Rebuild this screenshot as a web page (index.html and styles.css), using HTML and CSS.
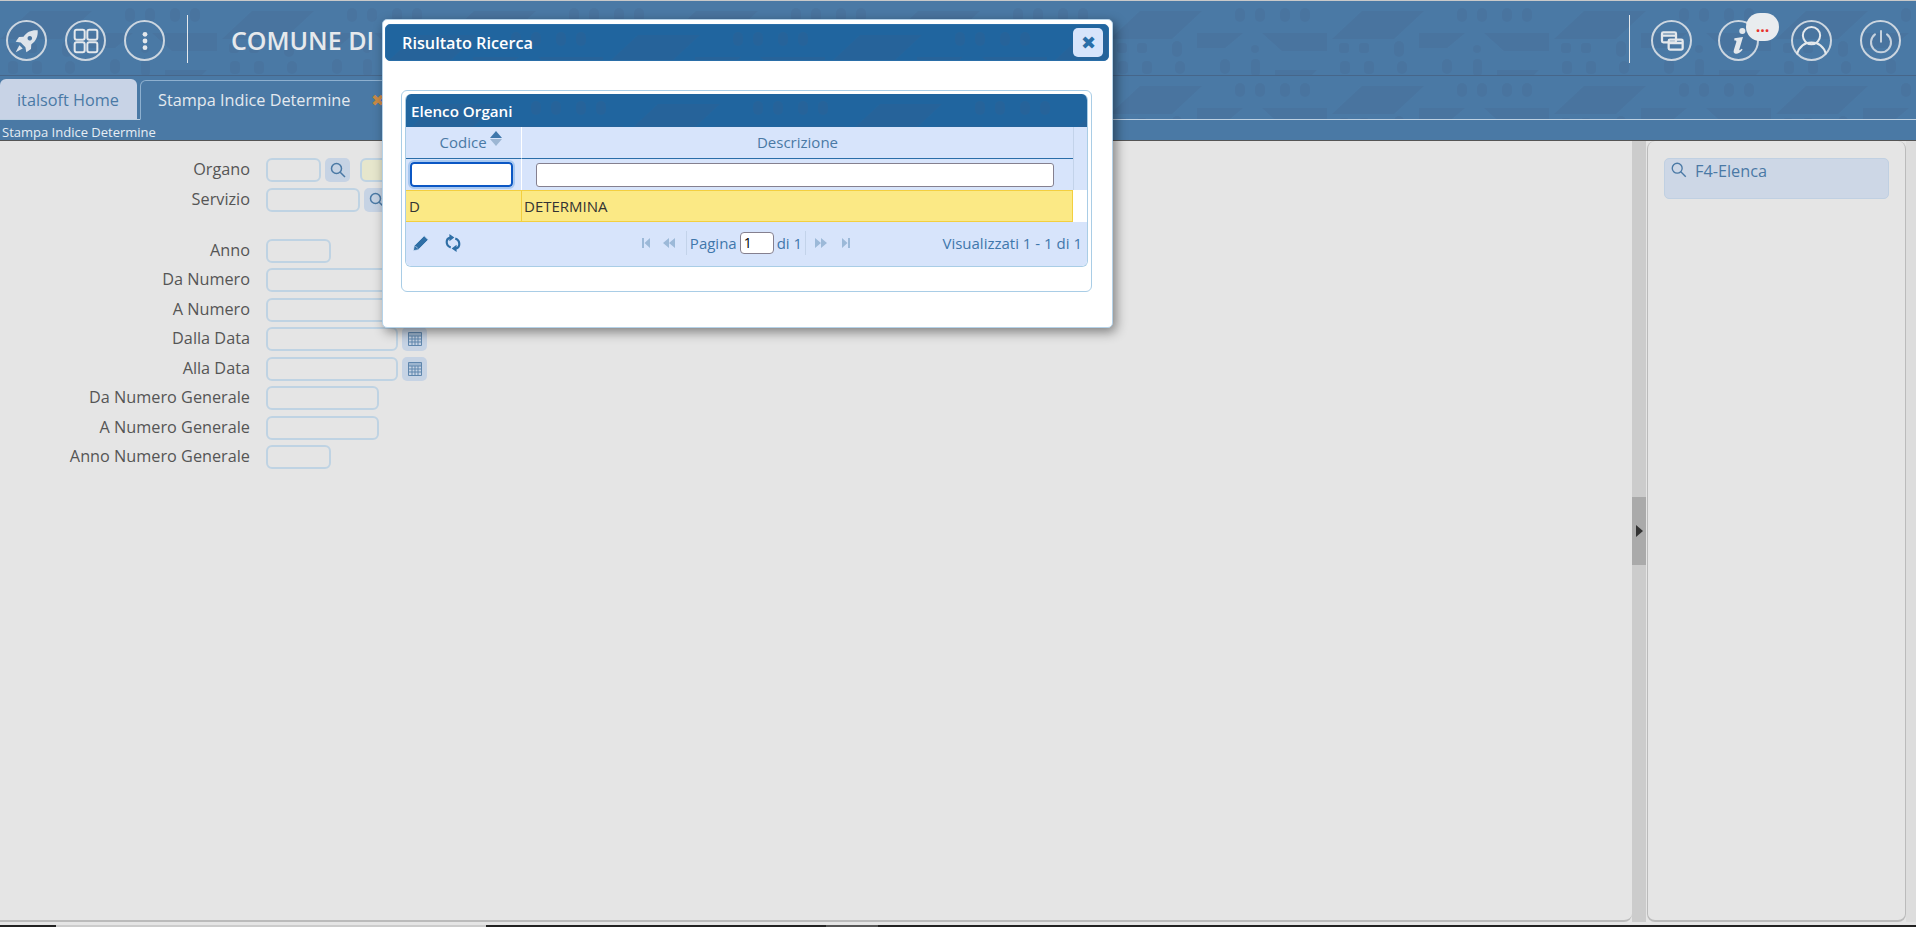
FILE: index.html
```html
<!DOCTYPE html>
<html lang="it">
<head>
  <meta charset="UTF-8">
  <title>Stampa Indice Determine</title>
  <link rel="stylesheet" href="styles.css">
</head>
<body>
  <svg class="defs" width="0" height="0">
    <defs>
      <pattern id="circuit" width="222" height="76" patternUnits="userSpaceOnUse">
        <g fill="#3f5a80" fill-opacity="0.17">
          <path d="M0 38 30 10h62L62 38z"/>
          <path d="M152 32h65v18h-45z"/>
          <path d="M87 32h46l-18 15H87z"/>
          <rect x="125" y="7" width="10" height="14" rx="5"/>
          <rect x="145" y="7" width="10" height="14" rx="5"/>
          <rect x="170" y="7" width="10" height="14" rx="5"/>
          <rect x="190" y="7" width="10" height="14" rx="5"/>
          <rect x="7" y="42" width="10" height="10" rx="3"/>
          <rect x="27" y="42" width="10" height="10" rx="3"/>
          <rect x="62" y="40" width="10" height="16" rx="5"/>
          <circle cx="145" cy="48" r="4"/>
          <rect x="8" y="60" width="10" height="13" rx="4"/>
          <rect x="32" y="60" width="10" height="13" rx="4"/>
          <rect x="65" y="60" width="10" height="13" rx="5"/>
          <rect x="110" y="58" width="10" height="15" rx="5"/>
          <rect x="141" y="58" width="9" height="17" rx="4"/>
          <path d="M165 69h42l-6 6h-36z"/>
        </g>
      </pattern>
    </defs>
  </svg>

  <header class="topbar">
    <svg class="deco"><rect width="100%" height="100%" fill="url(#circuit)"/></svg>
    <div class="topbar-left">
      <button class="round-btn">
        <svg viewBox="0 0 24 24"><path d="M20 4c-4.500-.4-8.200 1.200-10.600 4.800L6 9 3.500 12.500l3.800.7 3.500 3.500.7 3.800 3.500-2.500.2-3.400c3.600-2.400 5.200-6.100 4.800-10.600zM15.800 10a1.700 1.700 0 1 1 0-.01zM6.300 15.200 3.500 20.500l5.300-2.800z" fill="#dde3ea"/></svg>
      </button>
      <button class="round-btn">
        <svg viewBox="0 0 24 24" fill="none" stroke="#e4e8ec" stroke-width="1.500"><rect x="3.500" y="3.500" width="7.500" height="7.500" rx="1.500"/><rect x="13" y="3.500" width="7.500" height="7.500" rx="1.500"/><rect x="3.500" y="13" width="7.500" height="7.500" rx="1.500"/><rect x="13" y="13" width="7.500" height="7.500" rx="1.500"/></svg>
      </button>
      <button class="round-btn">
        <svg viewBox="0 0 24 24" fill="#e4e8ec"><circle cx="12" cy="7" r="1.800"/><circle cx="12" cy="12" r="1.800"/><circle cx="12" cy="17" r="1.800"/></svg>
      </button>
      <span class="vsep"></span>
      <h1 class="ente">COMUNE DI</h1>
    </div>
    <div class="topbar-right">
      <span class="vsep"></span>
      <button class="round-btn btn-windows">
        <svg viewBox="0 0 24 24" fill="none" stroke="#e4e8ec" stroke-width="1.700"><rect x="4.500" y="5.500" width="10.500" height="7.500" rx="1"/><rect x="9.500" y="11" width="10.500" height="7.500" rx="1"/><path d="M4.500 8h10.500M9.500 13.500H20"/></svg>
      </button>
      <button class="round-btn btn-info">
        <svg viewBox="0 0 24 24" fill="#e4e8ec"><circle cx="14.500" cy="4.500" r="2.300"/><path d="M8.500 10l6.500-1-2.800 9.300c-.2.700.4.900 1.900-.4l.6.600c-1.700 2-3.500 3.200-5.200 3-1.500-.2-1.800-1.300-1.300-2.900l1.800-5.800c.2-.9-.3-1.200-1.500-1.100z"/></svg>
        <span class="badge">...</span>
      </button>
      <button class="round-btn btn-user">
        <svg viewBox="0 0 24 24" fill="none" stroke="#e4e8ec" stroke-width="1.300"><circle cx="12" cy="8.800" r="5.600"/><path d="M2.500 21c1.500-5 5-7.700 9.500-7.700s8 2.700 9.500 7.700"/></svg>
      </button>
      <button class="round-btn btn-power">
        <svg viewBox="0 0 24 24" fill="none" stroke="#c6d2de" stroke-width="1.500" stroke-linecap="round"><path d="M12 4.500v8M7.500 7a7.500 7.500 0 1 0 9 0"/></svg>
      </button>
    </div>
  </header>

  <nav class="tabbar">
    <svg class="deco"><rect width="100%" height="100%" fill="url(#circuit)"/></svg>
    <a class="tab tab-home">italsoft Home</a>
    <a class="tab tab-active">Stampa Indice Determine <span class="tab-close">&#10006;</span></a>
  </nav>
  <div class="subtitle">Stampa Indice Determine</div>

  <main class="workarea">
    <section class="panel-main">
      <form class="form-grid">
        <label>Organo</label>
        <div class="field"><input class="w-55"><button type="button" class="icon-btn"><svg viewBox="0 0 20 20" class="ico-search"><circle cx="8.500" cy="8.500" r="5"/><path d="M12.200 12.200l4.800 4.800"/></svg></button><input class="w-55 yellowish"></div>
        <label>Servizio</label>
        <div class="field"><input class="w-94"><button type="button" class="icon-btn"><svg viewBox="0 0 20 20" class="ico-search"><circle cx="8.500" cy="8.500" r="5"/><path d="M12.200 12.200l4.800 4.800"/></svg></button></div>
        <div class="form-gap"></div>
        <label>Anno</label>
        <div class="field"><input class="w-65"></div>
        <label>Da Numero</label>
        <div class="field"><input class="w-132"></div>
        <label>A Numero</label>
        <div class="field"><input class="w-132"></div>
        <label>Dalla Data</label>
        <div class="field"><input class="w-132"><button type="button" class="icon-btn"><svg viewBox="0 0 20 20" class="ico-cal"><path class="cal-top" d="M3.500 3.500h13V7h-13z"/><path d="M3.500 3.500h13v13h-13zM3.500 7h13M3.500 10h13M3.500 13h13M7 7v9.500M10 7v9.500M13 7v9.500"/></svg></button></div>
        <label>Alla Data</label>
        <div class="field"><input class="w-132"><button type="button" class="icon-btn"><svg viewBox="0 0 20 20" class="ico-cal"><path class="cal-top" d="M3.500 3.500h13V7h-13z"/><path d="M3.500 3.500h13v13h-13zM3.500 7h13M3.500 10h13M3.500 13h13M7 7v9.500M10 7v9.500M13 7v9.500"/></svg></button></div>
        <label>Da Numero Generale</label>
        <div class="field"><input class="w-113"></div>
        <label>A Numero Generale</label>
        <div class="field"><input class="w-113"></div>
        <label>Anno Numero Generale</label>
        <div class="field"><input class="w-65"></div>
      </form>
    </section>
    <div class="splitter"><span class="splitter-handle"><i></i></span></div>
    <aside class="panel-side">
      <button class="f4-btn"><svg viewBox="0 0 20 20" class="ico-search"><circle cx="8" cy="8" r="5.500"/><path d="M12 12l5.500 5.500"/></svg>F4-Elenca</button>
    </aside>
    <div class="side-strip"></div>
  </main>

  <div class="bottom-strip">
    <span class="bs-dark b1"></span><span class="bs-light"></span><span class="bs-dark b2"></span><span class="bs-grey"></span><span class="bs-dark b3"></span>
  </div>

  <div class="dialog">
    <div class="dialog-title">
      <svg class="deco"><rect width="100%" height="100%" fill="url(#circuit)"/></svg>
      <span>Risultato Ricerca</span>
      <button class="dialog-close">&#10006;</button>
    </div>
    <div class="dialog-body">
      <div class="grid-wrap">
        <div class="grid">
          <div class="grid-caption">
            <svg class="deco"><rect width="100%" height="100%" fill="url(#circuit)"/></svg>
            <span>Elenco Organi</span>
          </div>
          <div class="grid-row grid-head">
            <div class="col-a">Codice <span class="sort"><i class="up"></i><i class="down"></i></span></div>
            <div class="col-b">Descrizione</div>
            <div class="col-s"></div>
          </div>
          <div class="grid-row grid-filter">
            <div class="col-a"><input class="filter-focus"></div>
            <div class="col-b"><input class="filter-input"></div>
            <div class="col-s"></div>
          </div>
          <div class="grid-row grid-data">
            <div class="col-a">D</div>
            <div class="col-b">DETERMINA</div>
            <div class="col-s"></div>
          </div>
          <div class="pager">
            <div class="pager-left">
              <svg viewBox="0 0 20 20" class="pg-tool"><path d="M13.500 2l4.500 4.500L7 17.500 1.500 18.500l1-5.500zM3.800 13.400l2.800 2.800" fill="#2f6fa6" stroke="#d7e4fb" stroke-width="0.800"/></svg>
              <svg viewBox="0 0 20 20" class="pg-tool"><path d="M7 4C4.500 4.500 3 6.500 3 9c0 2.800 1.800 5 4.500 6M13 16c2.500-.5 4-2.500 4-5 0-2.800-1.800-5-4.500-6" fill="none" stroke="#2f6fa6" stroke-width="2.400"/><path d="M6 0v8l5.500-4zM14 20v-8l-5.500 4z" fill="#2f6fa6"/></svg>
            </div>
            <div class="pager-mid">
              <svg viewBox="0 0 12 12" class="pg-nav nav-first"><path d="M2 1h2v10H2zM10 1v10L4.500 6z"/></svg>
              <svg viewBox="0 0 14 12" class="pg-nav nav-prev"><path d="M7 1v10L1 6zM13 1v10L7 6z"/></svg>
              <span class="pg-sep sep-a"></span>
              <span class="pg-label">Pagina</span><input class="pg-input" value="1"><span class="pg-label pg-of">di 1</span>
              <span class="pg-sep sep-b"></span>
              <svg viewBox="0 0 14 12" class="pg-nav nav-next"><path d="M1 1v10l6-5zM7 1v10l6-5z"/></svg>
              <svg viewBox="0 0 12 12" class="pg-nav nav-last"><path d="M2 1v10l5.500-5zM8 1h2v10H8z"/></svg>
            </div>
            <div class="pager-right">Visualizzati 1 - 1 di 1</div>
          </div>
        </div>
      </div>
    </div>
  </div>
</body>
</html>
```

FILE: styles.css
```css
* {
  box-sizing: border-box;
}
html, body {
  height: 100%;
}
body {
  margin: 0;
  height: 927px;
  overflow: hidden;
  display: flex;
  flex-direction: column;
  background-color: #e5e5e5;
  font-family: 'Open Sans', sans-serif;
  color: #555;
  border-top: 1px solid #c9c9c9;
}
button {
  font-family: inherit;
}
.defs {
  position: absolute;
}
.deco {
  position: absolute;
  left: 0;
  top: 0;
  width: 100%;
  height: 100%;
  pointer-events: none;
}

/* barra in alto */
.topbar {
  position: relative;
  height: 75px;
  flex: none;
  display: flex;
  justify-content: space-between;
  background-color: #4a79a5;
  border-bottom: 1px solid #46668a;
}
.topbar-left, .topbar-right {
  position: relative;
  display: flex;
  align-items: center;
}
.topbar-left {
  padding-left: 6px;
}
.topbar-left .round-btn {
  margin-right: 18px;
}
.topbar-left .vsep {
  margin: 2px 43px 0 4px;
}
.topbar-right {
  padding-right: 15px;
}
.topbar-right .vsep {
  margin-top: 2px;
}
.round-btn {
  position: relative;
  width: 41px;
  height: 41px;
  margin-top: 5px;
  padding: 0;
  border: 2px solid #ccd6e0;
  border-radius: 50%;
  background: transparent;
  display: flex;
  align-items: center;
  justify-content: center;
}
.round-btn svg {
  width: 32px;
  height: 32px;
}
.vsep {
  width: 1px;
  height: 48px;
  background-color: #e4e8ec;
}
.ente {
  margin: 3px 0 0;
  font-size: 25px;
  font-weight: 600;
  color: #e6e9ec;
}
.btn-windows {
  margin-left: 21px;
}
.btn-info {
  margin-left: 26px;
}
.btn-user {
  margin-left: 32px;
}
.btn-user svg {
  width: 37px;
  height: 37px;
}
.btn-power {
  margin-left: 28px;
}
.badge {
  position: absolute;
  left: 26px;
  top: -9px;
  width: 33px;
  height: 28px;
  border-radius: 14px;
  background-color: #e9ecef;
  color: #e8322c;
  font-size: 16px;
  font-weight: 700;
  line-height: 26px;
  text-align: center;
}

/* schede */
.tabbar {
  position: relative;
  height: 44px;
  flex: none;
  display: flex;
  align-items: flex-end;
  gap: 3px;
  background-color: #4a79a5;
  border-bottom: 1px solid #bcd0e2;
}
.tab {
  position: relative;
  height: 40px;
  padding-top: 8px;
  font-size: 16.250px;
  border-radius: 6px 6px 0 0;
}
.tab-home {
  width: 137px;
  padding-top: 10px;
  padding-left: 17px;
  background-color: #c8d3e6;
  color: #4a79a5;
}
.tab-active {
  width: 300px;
  margin-bottom: -1px;
  padding-left: 17px;
  background-color: #4a79a5;
  color: #e4e9ef;
  border: 1px solid #8eb0cf;
  border-bottom: 1px solid #4a79a5;
}
.tab-close {
  margin-left: 16px;
  color: #c98a45;
  font-size: 16px;
}
.subtitle {
  height: 21px;
  flex: none;
  padding: 4px 0 0 2px;
  background-color: #4a79a5;
  border-bottom: 1px solid #555;
  color: #e6edf4;
  font-size: 13px;
  line-height: 16px;
}

/* area di lavoro */
.workarea {
  flex: 1;
  min-height: 0;
  display: flex;
  padding-bottom: 5px;
}
.panel-main {
  width: 1632px;
  flex: none;
  border-bottom: 2px solid #bbb;
  border-radius: 0 0 8px 0;
  padding-top: 17px;
}
.splitter {
  width: 14px;
  flex: none;
  display: flex;
  align-items: center;
  background-color: #ccc;
}
.splitter-handle {
  width: 14px;
  height: 68px;
  margin-top: -2px;
  display: flex;
  align-items: center;
  justify-content: center;
  background-color: #aaa;
}
.splitter-handle i {
  border-left: 7px solid #333;
  border-top: 6px solid transparent;
  border-bottom: 6px solid transparent;
}
.panel-side {
  width: 259px;
  flex: none;
  margin-left: 1px;
  padding: 17px 16px 0 16px;
  border: 1px solid #bbb;
  border-width: 0 1px 2px 1px;
  border-radius: 8px;
}
.side-strip {
  flex: 1;
  background-color: #ddd;
}
.f4-btn {
  width: 225px;
  height: 41px;
  display: flex;
  align-items: flex-start;
  padding: 1px 5px;
  gap: 7px;
  border: 1px solid #c0d0e2;
  border-radius: 5px;
  background-color: #cdd7e6;
  color: #4a79a5;
  font-size: 16.250px;
}
.f4-btn .ico-search {
  width: 18px;
  height: 18px;
  margin-top: 1px;
}
.ico-search {
  fill: none;
  stroke: #4a79a5;
  stroke-width: 1.500;
}
.ico-cal {
  fill: none;
  stroke: #5f86ad;
  stroke-width: 1;
}
.ico-cal .cal-top {
  fill: #9db5cf;
  stroke: none;
}

/* modulo */
.form-grid {
  display: grid;
  grid-template-columns: 250px 1fr;
  column-gap: 16px;
  row-gap: 5.500px;
  align-items: center;
}
.form-grid label {
  height: 24px;
  text-align: right;
  font-size: 16.250px;
  line-height: 22px;
  color: #555;
}
.form-gap {
  grid-column: 1 / 3;
  height: 16px;
}
.field {
  display: flex;
  align-items: center;
  gap: 4px;
  height: 24px;
}
.field input {
  height: 24px;
  padding: 0 4px;
  border: 2px solid #bfd3e3;
  border-radius: 6px;
  background-color: #e5e5e5;
}
.w-55 { width: 55px; }
.w-65 { width: 65px; }
.w-94 { width: 94px; }
.w-113 { width: 113px; }
.w-132 { width: 132px; }
.field input.yellowish {
  margin-left: 6px;
  background-color: #e6e6cc;
}
.icon-btn {
  width: 25px;
  height: 24px;
  padding: 2px;
  border: none;
  border-radius: 5px;
  background-color: #c6d3e4;
  display: flex;
  align-items: center;
  justify-content: center;
}
.icon-btn svg {
  width: 20px;
  height: 20px;
}

/* finestra di dialogo */
.dialog {
  position: absolute;
  left: 382px;
  top: 19px;
  width: 731px;
  height: 309px;
  padding: 4px;
  background-color: #fff;
  border-radius: 5px;
  border: 1px solid #b5d2e8;
  box-shadow: 3px 4px 12px rgba(0,0,0,0.45);
}
.dialog-title {
  position: relative;
  height: 37px;
  margin: 0 -1px 0 -2px;
  border-radius: 5px;
  background-color: #20659f;
  border: 1px solid #2a6ea8;
  color: #fff;
  font-size: 16.250px;
  font-weight: 600;
  line-height: 36px;
  padding-left: 16px;
}
.dialog-title span {
  position: relative;
}
.dialog-close {
  position: absolute;
  right: 5px;
  top: 3px;
  width: 30px;
  height: 29px;
  padding: 0;
  border: none;
  border-radius: 5px;
  background-color: #d7e4fb;
  color: #2a6ea8;
  font-size: 18px;
  line-height: 29px;
}
.dialog-body {
  padding: 29px 16px 0 14px;
}
.grid-wrap {
  height: 202px;
  padding: 3px;
  border: 1px solid #a9cde6;
  border-radius: 6px;
}
.grid {
  height: 173px;
  display: flex;
  flex-direction: column;
  border: 1px solid #a9cde6;
  border-top: none;
  border-radius: 6px;
  background-color: #fff;
  overflow: hidden;
}
.grid-caption {
  position: relative;
  height: 33px;
  flex: none;
  padding-left: 5px;
  background-color: #20659f;
  color: #fff;
  font-size: 15.200px;
  font-weight: 600;
  line-height: 34px;
}
.grid-caption span {
  position: relative;
}
.grid-row {
  display: flex;
  flex: none;
}
.col-a {
  width: 116px;
  flex: none;
  border-right: 1px solid #fff;
}
.col-b {
  flex: 1;
}
.col-s {
  width: 14px;
  flex: none;
}
.grid-head {
  height: 32px;
  background-color: #d7e4fb;
  color: #4a79a5;
  font-size: 15px;
  line-height: 30px;
  text-align: center;
}
.grid-head .col-a {
  padding-left: 15px;
}
.grid-head .col-a, .grid-head .col-b {
  border-bottom: 1px solid #2a6ea8;
}
.grid-head .col-s {
  border-left: 1px solid #c3d3ea;
}
.sort {
  display: inline-block;
  vertical-align: 2px;
}
.sort i {
  display: block;
  border-left: 6px solid transparent;
  border-right: 6px solid transparent;
}
.sort .up {
  border-bottom: 7px solid #3f77ab;
  margin-bottom: 1px;
}
.sort .down {
  border-top: 7px solid #9cb6d3;
}
.grid-filter {
  height: 31px;
  background-color: #d7e4fb;
}
.grid-filter .col-a {
  padding: 3px 0 0 4px;
}
.grid-filter .col-b {
  padding: 4px 0 0 14px;
}
.grid-filter .col-s {
  border-left: 1px solid #c3d3ea;
}
.filter-focus {
  display: block;
  width: 103px;
  height: 25px;
  border: 2px solid #0b57c4;
  border-radius: 4px;
  outline: 2px solid #a8c8f0;
  outline-offset: 0;
}
.filter-input {
  display: block;
  width: 518px;
  height: 24px;
  border: 1px solid #85808f;
  border-radius: 3px;
}
.grid-data {
  height: 32px;
  color: #333;
  font-size: 15px;
  line-height: 30px;
}
.grid-data .col-a, .grid-data .col-b {
  background-color: #fbe985;
  border-top: 1px solid #f3cf3f;
  border-bottom: 1px solid #f3cf3f;
  border-right: 1px solid #f3cf3f;
  padding-left: 3px;
}
.grid-data .col-b {
  padding-left: 2px;
}
.pager {
  flex: 1;
  display: flex;
  align-items: center;
  justify-content: space-between;
  padding: 0 5px 3px 5px;
  background-color: #d7e4fb;
  color: #3f77ab;
  font-size: 15px;
}
.pager-left {
  display: flex;
  gap: 14px;
  width: 200px;
  padding-left: 1px;
}
.pg-tool {
  width: 18px;
  height: 18px;
}
.pager-mid {
  display: flex;
  align-items: center;
  margin-right: 3px;
}
.pg-nav {
  width: 12px;
  height: 12px;
  fill: #9cb9d8;
}
.nav-first {
  margin-left: 2px;
}
.nav-prev, .nav-next {
  width: 14px;
}
.nav-prev {
  margin-left: 10px;
}
.sep-a {
  margin: 0 3px 0 10px;
}
.sep-b {
  margin: 0 8px 0 3px;
}
.nav-last {
  margin-left: 12px;
}
.pg-sep {
  width: 1px;
  height: 24px;
  background-color: #c3d3ea;
}
.pg-input {
  width: 34px;
  height: 22px;
  margin-left: 3px;
  padding: 0 3px;
  border: 1px solid #85808f;
  border-radius: 4px;
  font-family: inherit;
  font-size: 14px;
}
.pg-of {
  margin-left: 3px;
}
.pager-right {
  width: 200px;
  text-align: right;
}

/* striscia in basso */
.bottom-strip {
  position: absolute;
  left: 0;
  right: 0;
  bottom: 0;
  height: 2px;
  display: flex;
}
.bs-dark {
  background-color: #222;
}
.b1 { width: 56px; }
.b2 { width: 340px; }
.b3 { flex: 1; }
.bs-light {
  width: 430px;
  background-color: #ccc;
}
.bs-grey {
  width: 52px;
  background-color: #555;
}
```
